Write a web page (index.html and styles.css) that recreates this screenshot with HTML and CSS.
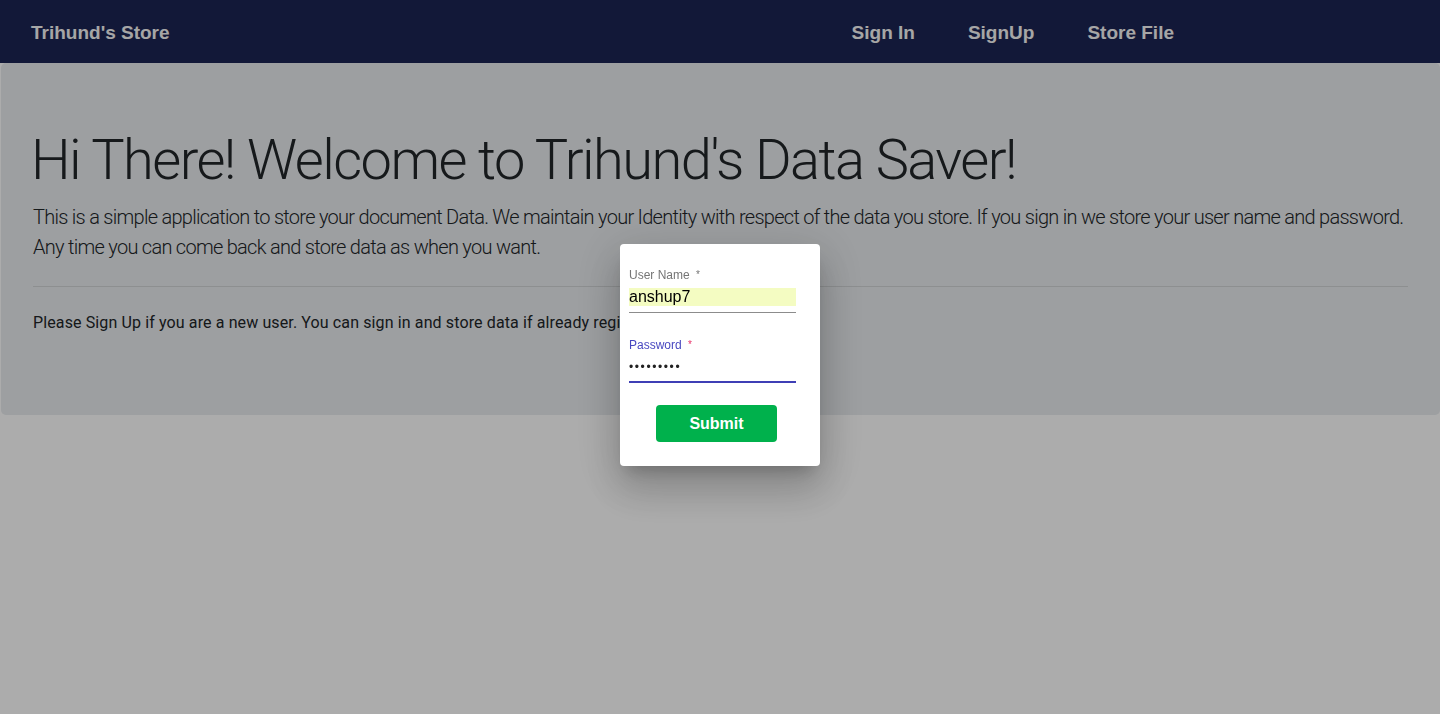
FILE: index.html
```html
<!DOCTYPE html>
<html lang="en">
<head>
<meta charset="utf-8">
<title>Trihund's Store</title>
<link rel="stylesheet" href="styles.css">
</head>
<body>
<nav class="navbar">
  <a class="brand" href="#">Trihund's Store</a>
  <div class="nav-links">
    <a class="nav-link" href="#">Sign In</a>
    <a class="nav-link" href="#">SignUp</a>
    <a class="nav-link" href="#">Store File</a>
  </div>
</nav>
<main class="jumbotron">
  <h1 class="display">Hi There! Welcome to Trihund's Data Saver!</h1>
  <p class="lead">This is a simple application to store your document Data. We maintain your Identity with respect of the data you store. If you sign in we store your user name and password. Any time you can come back and store data as when you want.</p>
  <hr class="divider">
  <p class="note">Please Sign Up if you are a new user. You can sign in and store data if already registered.</p>
</main>
<div class="backdrop">
  <div class="dialog">
    <div class="field">
      <label class="label">User Name <span class="star">*</span></label>
      <div class="input-wrap">
        <input class="input autofill" type="text" value="anshup7" readonly>
      </div>
    </div>
    <div class="field focused">
      <label class="label">Password <span class="star">*</span></label>
      <div class="input-wrap">
        <input class="input" type="password" value="anshup777" readonly>
      </div>
    </div>
    <div class="actions">
      <button class="submit" type="button">Submit</button>
    </div>
  </div>
</div>
</body>
</html>
```

FILE: styles.css
```css
* { box-sizing: border-box; }
html, body { margin: 0; padding: 0; }
body {
  background: #ffffff;
  font-family: "Liberation Sans", Arial, sans-serif;
  color: #212529;
  height: 714px;
  overflow: hidden;
}
.navbar {
  height: 63px;
  background: #1b2453;
  display: flex;
  align-items: center;
  padding-left: 31px;
  padding-top: 2px;
}
.brand {
  color: #f6f6f6;
  font-weight: bold;
  font-size: 19px;
  text-decoration: none;
}
.nav-links {
  margin-left: auto;
  margin-right: 266px;
  display: flex;
  gap: 53px;
}
.nav-link {
  color: #f6f6f6;
  font-weight: bold;
  font-size: 19px;
  text-decoration: none;
}
.jumbotron {
  background: #e9ecef;
  border-radius: 5px;
  padding: 64px 32px;
  margin-left: 1px;
  font-family: Roboto, "Liberation Sans", sans-serif;
}
.display {
  font-size: 56px;
  font-weight: 300;
  line-height: 1.2;
  margin: 0 0 8px -2px;
  letter-spacing: -1.55px;
}
.lead {
  font-size: 20px;
  font-weight: 300;
  line-height: 30px;
  margin: 0 0 16px 0;
  letter-spacing: -0.72px;
}
.divider {
  border: 0;
  border-top: 1px solid rgba(0,0,0,0.1);
  margin: 24px 0;
}
.note {
  font-size: 16px;
  line-height: 24px;
  margin: 0 0 16px 0;
  letter-spacing: 0.12px;
}
.backdrop {
  position: fixed;
  inset: 0;
  background: rgba(0,0,0,0.325);
  display: flex;
  align-items: center;
  justify-content: center;
  padding-bottom: 4px;
}
.dialog {
  width: 200px;
  height: 222px;
  background: #ffffff;
  border-radius: 4px;
  box-shadow: 0 11px 15px -7px rgba(0,0,0,0.2), 0 24px 38px 3px rgba(0,0,0,0.14), 0 9px 46px 8px rgba(0,0,0,0.12);
  padding: 24px 24px 24px 9px;
  font-family: "Liberation Sans", Arial, sans-serif;
}
.field { width: 167px; }
.field + .field { margin-top: 25px; }
.label {
  display: block;
  font-size: 12px;
  line-height: 14px;
  color: #757575;
}
.star { margin-left: 3px; font-size: 10px; vertical-align: top; }
.focused .label { color: #4848c0; }
.focused .star { color: #e8336a; }
.input-wrap {
  margin-top: 6px;
  padding-bottom: 6px;
  border-bottom: 1px solid #8c8c8c;
}
.focused .input-wrap {
  border-bottom: 2px solid #3f3fb5;
  padding-bottom: 5px;
}
.input {
  display: block;
  width: 100%;
  height: 18px;
  border: 0;
  outline: none;
  padding: 0;
  margin: 0;
  font-family: "Liberation Sans", Arial, sans-serif;
  font-size: 16px;
  color: #000000;
  background: transparent;
}
.input.autofill { background: #f4fcc2; }
.focused .input { font-size: 12px; letter-spacing: 1.6px; color: #222222; }
.actions {
  display: flex;
  padding-left: 27px;
  margin-top: 22px;
}
.submit {
  width: 121px;
  height: 37px;
  background: #00b14c;
  color: #ffffff;
  border: 0;
  border-radius: 4px;
  font-family: "Liberation Sans", Arial, sans-serif;
  font-weight: bold;
  font-size: 16px;
}
```
